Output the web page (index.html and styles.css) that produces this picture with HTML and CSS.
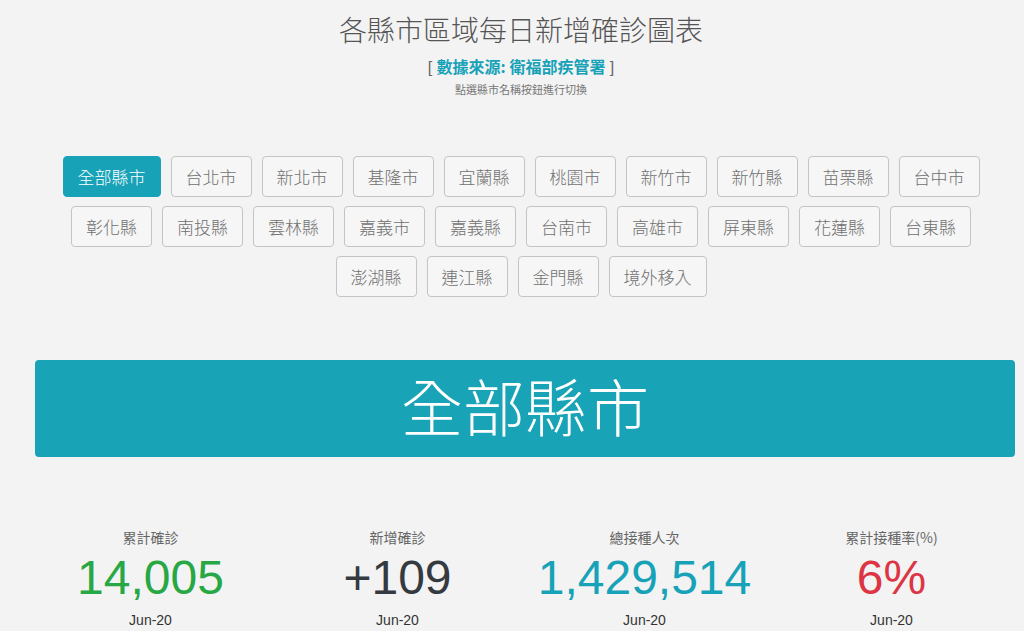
FILE: index.html
```html
<!DOCTYPE html>
<html>
<head>
    <meta charset="utf-8">
    <title>各縣市區域每日新增確診圖表</title>
    <link rel="stylesheet" href="styles.css">
</head>
<body>
    <div class="page">
        <h1 class="title">各縣市區域每日新增確診圖表</h1>
        <p class="source">[ <span class="source-name">數據來源: 衛福部疾管署</span> ]</p>
        <p class="hint">點選縣市名稱按鈕進行切換</p>

        <!-- City buttons -->
        <div class="city-list">
            <button class="city-btn active">全部縣市</button>
            <button class="city-btn">台北市</button>
            <button class="city-btn">新北市</button>
            <button class="city-btn">基隆市</button>
            <button class="city-btn">宜蘭縣</button>
            <button class="city-btn">桃園市</button>
            <button class="city-btn">新竹市</button>
            <button class="city-btn">新竹縣</button>
            <button class="city-btn">苗栗縣</button>
            <button class="city-btn">台中市</button>
            <button class="city-btn">彰化縣</button>
            <button class="city-btn">南投縣</button>
            <button class="city-btn">雲林縣</button>
            <button class="city-btn">嘉義市</button>
            <button class="city-btn">嘉義縣</button>
            <button class="city-btn">台南市</button>
            <button class="city-btn">高雄市</button>
            <button class="city-btn">屏東縣</button>
            <button class="city-btn">花蓮縣</button>
            <button class="city-btn">台東縣</button>
            <button class="city-btn">澎湖縣</button>
            <button class="city-btn">連江縣</button>
            <button class="city-btn">金門縣</button>
            <button class="city-btn">境外移入</button>
        </div>

        <div class="banner">全部縣市</div>

        <!-- Summary numbers -->
        <div class="stats">
            <div class="stat">
                <div class="stat-label">累計確診</div>
                <div class="stat-value green">14,005</div>
                <div class="stat-date">Jun-20</div>
            </div>
            <div class="stat">
                <div class="stat-label">新增確診</div>
                <div class="stat-value dark">+109</div>
                <div class="stat-date">Jun-20</div>
            </div>
            <div class="stat">
                <div class="stat-label">總接種人次</div>
                <div class="stat-value teal">1,429,514</div>
                <div class="stat-date">Jun-20</div>
            </div>
            <div class="stat">
                <div class="stat-label">累計接種率(%)</div>
                <div class="stat-value red">6%</div>
                <div class="stat-date">Jun-20</div>
            </div>
        </div>
    </div>
</body>
</html>
```

FILE: styles.css
```css
body {
    margin: 0;
    background-color: #f3f3f3;
    font-family: "Liberation Sans", "Noto Sans CJK TC", sans-serif;
    color: #555;
}

.page {
    padding-left: 18px;
}

.title {
    margin: 11px 0 0;
    font-family: "Noto Sans CJK TC", sans-serif;
    font-size: 28px;
    font-weight: 300;
    line-height: 36px;
    text-align: center;
    color: #555;
}

.source {
    margin: 7px 0 0;
    font-size: 16px;
    line-height: 24px;
    text-align: center;
    color: #666;
}

.source-name {
    font-family: "Noto Sans CJK TC", sans-serif;
    font-weight: bold;
    color: #17a2b8;
}

.hint {
    margin: 1px 0 0;
    font-family: "Noto Sans CJK TC", sans-serif;
    font-size: 11px;
    line-height: 16px;
    text-align: center;
    color: #777;
}

.city-list {
    display: flex;
    flex-wrap: wrap;
    justify-content: center;
    gap: 9px 10px;
    max-width: 940px;
    margin: 59px auto 0;
}

.city-btn {
    padding: 7px 14px;
    font-family: "Noto Sans CJK TC", sans-serif;
    font-size: 17px;
    font-weight: 300;
    line-height: 25px;
    color: #707070;
    background-color: #f6f6f6;
    border: 1px solid #c4c4c4;
    border-radius: 4px;
}

.city-btn.active {
    color: #fff;
    background-color: #17a2b8;
    border-color: #17a2b8;
}

.banner {
    margin: 63px 9px 0 17px;
    height: 97px;
    padding-bottom: 6px;
    box-sizing: border-box;
    line-height: 91px;
    font-family: "Noto Sans CJK TC", sans-serif;
    font-size: 62px;
    font-weight: 300;
    text-align: center;
    color: #fff;
    background-color: #18a3b7;
    border-radius: 4px;
}

.stats {
    display: grid;
    grid-template-columns: repeat(4, 1fr);
    margin: 70px 9px 0 9px;
}

.stat {
    text-align: center;
}

.stat-label {
    font-family: "Noto Sans CJK TC", sans-serif;
    font-size: 14px;
    line-height: 20px;
    color: #666;
}

.stat-value {
    font-size: 48px;
    line-height: 56px;
    margin-top: 3px;
}

.stat-date {
    margin-top: 4px;
    font-size: 14px;
    line-height: 20px;
    color: #333;
}

.green { color: #28a745; }
.dark { color: #343a40; }
.teal { color: #17a2b8; }
.red { color: #dc3545; }
```
